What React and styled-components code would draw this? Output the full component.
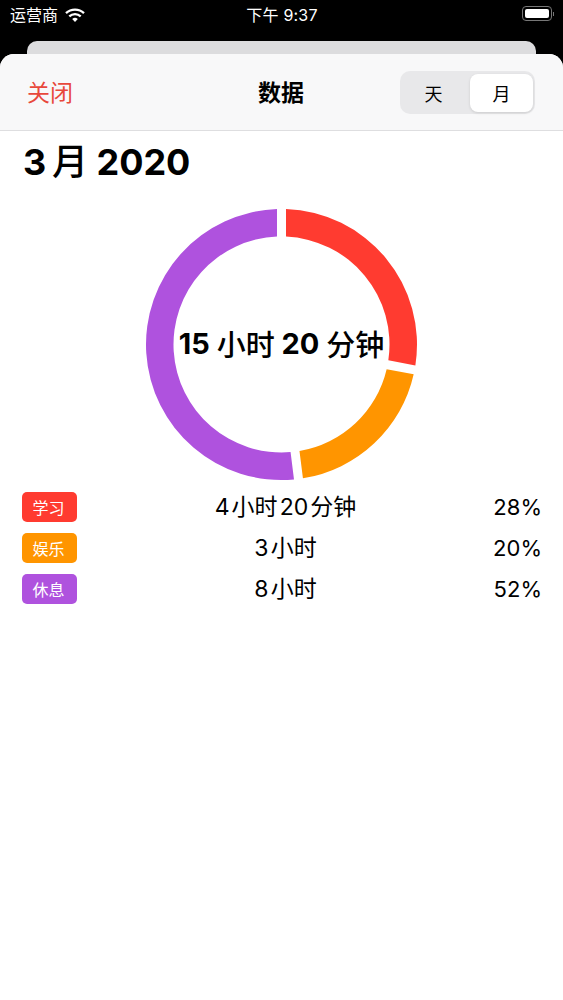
import React from "react";
import styled, { createGlobalStyle } from "styled-components";

const Global = createGlobalStyle`
  html, body { margin: 0; padding: 0; background: #000; }
  body { font-family: Inter, "Noto Sans CJK SC", "Liberation Sans", sans-serif; }
`;
const Page = styled.div`width: 563px; height: 1000px; background: #000; display: flex; flex-direction: column; overflow: hidden;`;
const StatusBar = styled.div`height: 41px; flex: none; color: #fff; display: grid; grid-template-columns: 1fr auto 1fr; align-items: start; padding: 4px 9px 0 10px; box-sizing: border-box;`;
const Carrier = styled.div`display: flex; align-items: center; gap: 7px; font-size: 16px; line-height: 22px; font-weight: 400;`;
const Clock = styled.div`font-size: 16px; line-height: 22px; font-weight: 400; letter-spacing: 0.2px;`;
const BatteryWrap = styled.div`justify-self: end; display: flex; align-items: center; margin-top: 2px;`;
const Battery = styled.div`width: 24px; height: 9px; padding: 2px; border: 1px solid #777; border-radius: 4px;`;
const BatteryFill = styled.div`width: 100%; height: 100%; background: #fff; border-radius: 2px;`;
const BatteryTip = styled.div`width: 1px; height: 4px; margin-left: 1px; background: #777;`;
const BackCard = styled.div`height: 13px; flex: none; margin: 0 27px; background: #dcdcde; border-radius: 10px 10px 0 0;`;
const Sheet = styled.div`flex: 1; background: #fff; border-radius: 14px 14px 0 0; overflow: hidden; display: flex; flex-direction: column;`;
const NavBar = styled.header`height: 77px; box-sizing: border-box; flex: none; background: #f8f8f9; border-bottom: 1px solid #dedee0; display: grid; grid-template-columns: 1fr auto 1fr; align-items: center; padding: 0 28px 0 27px;`;
const CloseLink = styled.div`color: #e8483c; font-size: 23px; line-height: 30px; margin-top: 1px;`;
const NavTitle = styled.div`color: #000; font-size: 23px; font-weight: 600; line-height: 30px; margin-top: 1px;`;
const Segmented = styled.div`justify-self: end; width: 135px; height: 43px; box-sizing: border-box; margin-top: 1px; background: #e8e8ea; border-radius: 10px; padding: 3px 2px 2px 3px; display: grid; grid-template-columns: 1fr 63px; align-items: stretch;`;
const Segment = styled.div`display: flex; align-items: center; justify-content: center; font-size: 18px; color: #000; border-radius: 8px;
  padding-right: ${p => (p.$active ? "0" : "6px")};
  background: ${p => (p.$active ? "#fff" : "transparent")};
  box-shadow: ${p => (p.$active ? "0 1px 3px rgba(0,0,0,.12)" : "none")};`;
const Heading = styled.h1`margin: 8px 0 0 23px; font-size: 36px; line-height: 46px; font-weight: 700; color: #000;`;
const Unit = styled.span`font-weight: 500;`;
const RingWrap = styled.div`position: relative; width: 275px; height: 275px; margin: 22px 0 0 144px; flex: none;`;
const RingCenter = styled.div`position: absolute; inset: 0; padding-bottom: 3px; box-sizing: border-box; display: flex; align-items: center; justify-content: center; font-size: 29px; font-weight: 700; color: #000; white-space: pre;`;
const Legend = styled.div`margin-top: 9px; padding: 0 22px; display: flex; flex-direction: column; gap: 11px;`;
const Row = styled.div`height: 30px; display: grid; grid-template-columns: 55px 1fr 55px; align-items: center;`;
const Tag = styled.div`height: 30px; border-radius: 5px; background: ${p => p.$color}; color: #fff; font-size: 16px; padding-right: 2px; box-sizing: border-box; display: flex; align-items: center; justify-content: center;`;
const Duration = styled.div`text-align: center; font-size: 23px; line-height: 30px; color: #000; margin: 1px 0 0 8px;`;
const Percent = styled.div`text-align: right; font-size: 22px; line-height: 30px; color: #000; white-space: nowrap; margin: 1px -1px 0 0;`;

const C = 137.5, RO = 135.5, RI = 108, GAP = 4.5;
const pt = (r, a) => [C + r * Math.sin(a), C - r * Math.cos(a)];
function seg(from, to) {
  const a = d => (d * Math.PI) / 180;
  const oa = Math.asin(GAP / RO), ia = Math.asin(GAP / RI);
  const p1 = pt(RO, a(from) + oa), p2 = pt(RO, a(to) - oa), p3 = pt(RI, a(to) - ia), p4 = pt(RI, a(from) + ia);
  const large = to - from > 180 ? 1 : 0;
  return `M${p1} A${RO} ${RO} 0 ${large} 1 ${p2} L${p3} A${RI} ${RI} 0 ${large} 0 ${p4} Z`;
}
const rows = [
  { tag: "学习", color: "#ff3b30", time: "4\u200a小时\u200a20\u200a分钟", pct: "28%" },
  { tag: "娱乐", color: "#ff9500", time: "3\u200a小时", pct: "20%" },
  { tag: "休息", color: "#af52de", time: "8\u200a小时", pct: "52%" },
];

export default function App() {
  return (
    <Page>
      <Global />
      <StatusBar>
        <Carrier>
          运营商
          <svg width="20" height="15" viewBox="0 0 20 15">
            <path d="M1 5.2a13 13 0 0 1 18 0" fill="none" stroke="#fff" strokeWidth="2.3" />
            <path d="M4.3 8.4a8.4 8.4 0 0 1 11.4 0" fill="none" stroke="#fff" strokeWidth="2.3" />
            <path d="M7.2 11a4 4 0 0 1 5.6 0L10 14z" fill="#fff" />
          </svg>
        </Carrier>
        <Clock>下午 9:37</Clock>
        <BatteryWrap>
          <Battery><BatteryFill /></Battery>
          <BatteryTip />
        </BatteryWrap>
      </StatusBar>
      <BackCard />
      <Sheet>
        <NavBar>
          <CloseLink>关闭</CloseLink>
          <NavTitle>数据</NavTitle>
          <Segmented>
            <Segment>天</Segment>
            <Segment $active>月</Segment>
          </Segmented>
        </NavBar>
        <Heading>3{"\u2009"}<Unit>月</Unit> 2020</Heading>
        <RingWrap>
          <svg width="275" height="275" viewBox="0 0 275 275">
            <path d={seg(0, 100.8)} fill="#ff3b30" />
            <path d={seg(100.8, 172.8)} fill="#ff9500" />
            <path d={seg(172.8, 360)} fill="#af52de" />
          </svg>
          <RingCenter>15 <Unit>小时</Unit> 20 <Unit>分钟</Unit></RingCenter>
        </RingWrap>
        <Legend>
          {rows.map(r => (
            <Row key={r.tag}>
              <Tag $color={r.color}>{r.tag}</Tag>
              <Duration>{r.time}</Duration>
              <Percent>{r.pct}</Percent>
            </Row>
          ))}
        </Legend>
      </Sheet>
    </Page>
  );
}
